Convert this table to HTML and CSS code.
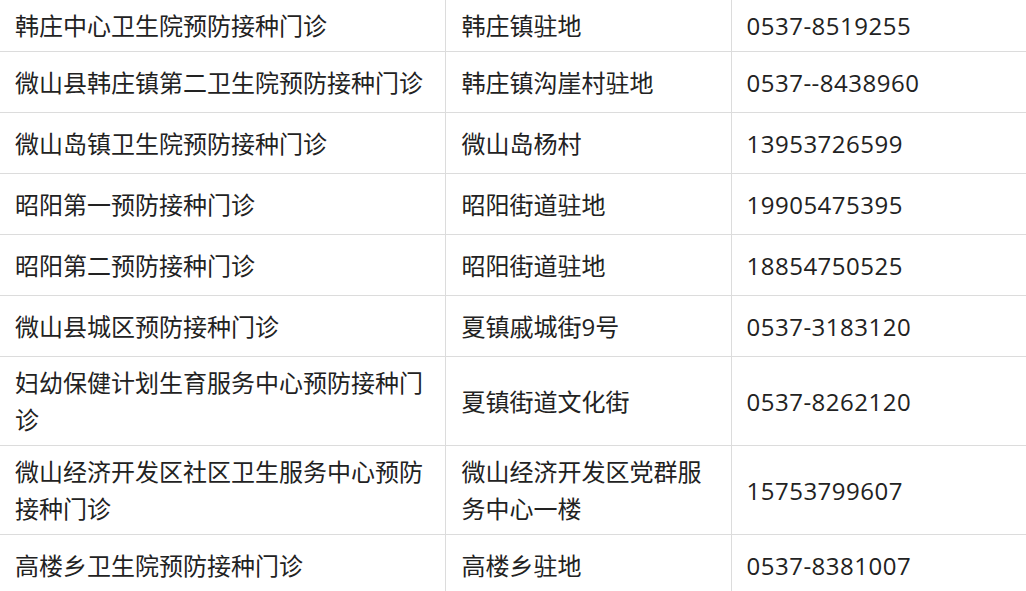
FILE: index.html
```html
<!DOCTYPE html>
<html lang="zh-CN">
<head>
<meta charset="utf-8">
<title>预防接种门诊</title>
<link rel="stylesheet" href="styles.css">
</head>
<body>
<div class="wrap">
<table class="clinics">
<colgroup><col class="c1"><col class="c2"><col class="c3"></colgroup>
<tbody>
<tr class="first"><td>韩庄中心卫生院预防接种门诊</td><td>韩庄镇驻地</td><td>0537-8519255</td></tr>
<tr><td>微山县韩庄镇第二卫生院预防接种门诊</td><td>韩庄镇沟崖村驻地</td><td>0537--8438960</td></tr>
<tr><td>微山岛镇卫生院预防接种门诊</td><td>微山岛杨村</td><td>13953726599</td></tr>
<tr><td>昭阳第一预防接种门诊</td><td>昭阳街道驻地</td><td>19905475395</td></tr>
<tr><td>昭阳第二预防接种门诊</td><td>昭阳街道驻地</td><td>18854750525</td></tr>
<tr><td>微山县城区预防接种门诊</td><td>夏镇戚城街9号</td><td>0537-3183120</td></tr>
<tr><td>妇幼保健计划生育服务中心预防接种门诊</td><td>夏镇街道文化街</td><td>0537-8262120</td></tr>
<tr><td>微山经济开发区社区卫生服务中心预防接种门诊</td><td>微山经济开发区党群服务中心一楼</td><td>15753799607</td></tr>
<tr><td>高楼乡卫生院预防接种门诊</td><td>高楼乡驻地</td><td>0537-8381007</td></tr>
</tbody>
</table>
</div>
</body>
</html>
```

FILE: styles.css
```css
html, body {
  margin: 0;
  padding: 0;
  background: #ffffff;
  overflow: hidden;
}

.wrap {
  width: 1026px;
  overflow: hidden;
}

.clinics {
  margin-top: -1px;
  border-collapse: collapse;
  table-layout: fixed;
  width: 1026px;
  font-family: "Open Sans", "Noto Sans CJK SC", sans-serif;
  font-size: 24px;
  color: #222222;
}

.c1 { width: 445px; }
.c2 { width: 286px; }
.c3 { width: 295px; }

.clinics td {
  border: 1px solid #dcdcdc;
  height: 61px;
  box-sizing: border-box;
  padding: 7px 15px 7px 15px;
  line-height: 37px;
  vertical-align: middle;
  word-break: break-all;
}

.clinics tr.first td {
  height: 52px;
}

.clinics td:first-child {
  border-left: none;
}

.clinics td:last-child {
  border-right: none;
  letter-spacing: 0.5px;
}

.clinics td:nth-child(2) {
  padding-left: 16px;
  padding-right: 16px;
}
```
